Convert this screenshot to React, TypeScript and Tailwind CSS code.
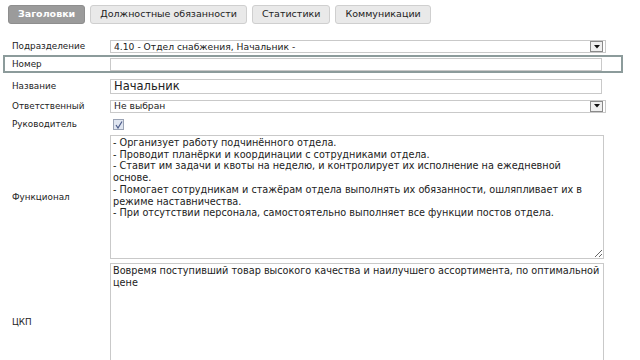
import React from "react";

const font = { fontFamily: '"DejaVu Sans", Verdana, sans-serif' };

const funcText =
  "- Организует работу подчинённого отдела.\n- Проводит планёрки и координации с сотрудниками отдела.\n- Ставит им задачи и квоты на неделю, и контролирует их исполнение на ежедневной основе.\n- Помогает сотрудникам и стажёрам отдела выполнять их обязанности, ошляпливает их в режиме наставничества.\n- При отсутствии персонала, самостоятельно выполняет все функции постов отдела.";

const ckpText =
  "Вовремя поступивший товар высокого качества и наилучшего ассортимента, по оптимальной цене";

function Tab({ label, active }: { label: string; active?: boolean }) {
  return (
    <div
      className={
        active
          ? "h-[19px] px-[9px] flex items-center rounded-[3px] bg-[#9b9b9b] border border-[#8e8e8e] text-white font-bold text-[9.5px]"
          : "h-[19px] px-[9px] flex items-center rounded-[3px] bg-[#e9e9e9] border border-[#cfcfcf] text-[#222] text-[9.5px]"
      }
    >
      {label}
    </div>
  );
}

function DropButton() {
  return (
    <div className="w-[13px] h-[11px] border border-[#8a8a8a] bg-[#f0f0f0] flex items-center justify-center">
      <svg width="6" height="4" viewBox="0 0 6 4">
        <path d="M0 0 L6 0 L3 3.5 Z" fill="#111" />
      </svg>
    </div>
  );
}

function Select({ value }: { value: string }) {
  return (
    <div className="w-[494px] h-[13px] flex items-center">
      <div className="flex-1 h-full border border-[#c9c9c9] bg-white flex items-center pl-[3px] text-[9.2px] text-[#222] leading-none">
        {value}
      </div>
      <div className="ml-[-16px] mr-[1px]">
        <DropButton />
      </div>
    </div>
  );
}

function Label({ children }: { children: React.ReactNode }) {
  return <div className="w-[98px] text-[8.8px] text-[#222] leading-none">{children}</div>;
}

export default function App() {
  return (
    <div className="w-[640px] h-[360px] overflow-hidden bg-white" style={font}>
      {/* Tabs */}
      <div className="flex gap-[5px] pl-[8px] pt-[5px]">
        <Tab label="Заголовки" active />
        <Tab label="Должностные обязанности" />
        <Tab label="Статистики" />
        <Tab label="Коммуникации" />
      </div>

      {/* Form */}
      <div className="mt-[16px] flex flex-col">
        <div className="flex items-center pl-[12px] h-[13px]">
          <Label>Подразделение</Label>
          <Select value="4.10 - Отдел снабжения, Начальник -" />
        </div>

        <div className="mt-[2px] ml-[3px] w-[620px] h-[18px] border-2 border-[#8c9b9b] flex items-center pl-[7px]">
          <Label>Номер</Label>
          <div className="w-[492px] h-[13px] border border-[#c9c9c9] bg-white" />
        </div>

        <div className="mt-[6px] flex items-center pl-[12px] h-[15px]">
          <Label>Название</Label>
          <div className="w-[492px] h-[15px] border border-[#c9c9c9] bg-white flex items-center pl-[3px] text-[11.5px] text-[#222] leading-none">
            Начальник
          </div>
        </div>

        <div className="mt-[5px] flex items-center pl-[12px] h-[14px]">
          <Label>Ответственный</Label>
          <Select value="Не выбран" />
        </div>

        <div className="mt-[5px] flex items-center pl-[12px] h-[13px]">
          <Label>Руководитель</Label>
          <div className="ml-[3px] w-[11px] h-[11px] border border-[#9aa3b5] bg-[#dfe5f0] flex items-center justify-center">
            <svg width="8" height="8" viewBox="0 0 8 8">
              <path d="M1 4 L3 7 L7 0.5" stroke="#4a5a88" strokeWidth="1.2" fill="none" />
            </svg>
          </div>
        </div>

        <div className="mt-[4px] flex items-center pl-[12px]">
          <Label>Функционал</Label>
          <textarea
            readOnly
            value={funcText}
            className="w-[494px] h-[124px] border border-[#c9c9c9] bg-white px-[2px] py-[1px] text-[9.7px] leading-[11.7px] text-[#222] outline-none resize-y"
          />
        </div>

        <div className="mt-[4px] flex items-center pl-[12px]">
          <Label>ЦКП</Label>
          <textarea
            readOnly
            value={ckpText}
            className="w-[494px] h-[118px] border border-[#c9c9c9] bg-white px-[2px] py-[1px] text-[9.7px] leading-[11.7px] text-[#222] outline-none"
          />
        </div>
      </div>
    </div>
  );
}
